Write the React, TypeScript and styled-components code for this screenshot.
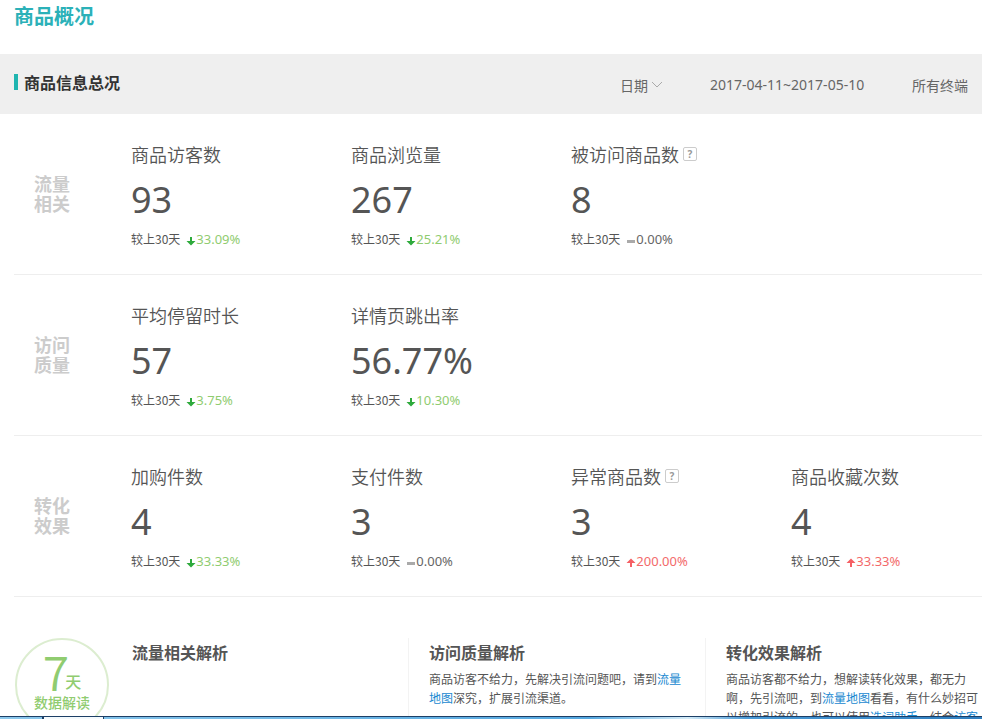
import React from "react";
import styled, { createGlobalStyle, css } from "styled-components";

const Global = createGlobalStyle`
  * { box-sizing: border-box; }
  html, body, #root { height: 100%; }
  body {
    margin: 0;
    overflow: hidden;
    background: #fff;
    color: #555;
    font-family: "Noto Sans", "Noto Sans CJK SC", sans-serif;
  }
  h1, h2, h3, p, dl, dt, dd { margin: 0; }
`;

const cjk = css`font-family: "Noto Sans CJK SC", sans-serif;`;

const Page = styled.div`
  height: 100vh;
  display: flex;
  flex-direction: column;
`;

const Main = styled.main`
  flex: 1;
  min-height: 0;
  overflow: hidden;
`;

const Title = styled.h1`
  ${cjk}
  height: 54px;
  padding: 2px 14px 0;
  font-size: 20px;
  line-height: 28px;
  font-weight: 700;
  color: #2bb1b8;
`;

const Toolbar = styled.header`
  display: flex;
  align-items: center;
  height: 60px;
  padding: 0 14px;
  background: #efefef;
  color: #666;
`;

const SectionTitle = styled.h2`
  ${cjk}
  flex: 1;
  padding-left: 6px;
  margin-bottom: 4px;
  border-left: 4px solid #1fb5b0;
  font-size: 16px;
  line-height: 16px;
  font-weight: 700;
  color: #333;
`;

const ToolButton = styled.button`
  ${cjk}
  display: flex;
  align-items: center;
  gap: 4px;
  padding: 2px 0 0;
  border: 0;
  background: none;
  color: inherit;
  font-size: 14px;
  line-height: 20px;
`;

const DateRange = styled.time`
  margin: 0 44px 0 48px;
  min-width: 158px;
  padding-top: 2px;
  font-size: 14px;
  line-height: 20px;
`;

const MetricRow = styled.section`
  display: grid;
  grid-template-columns: 117px minmax(0, 1fr);
  height: 161px;
  margin-left: 14px;
  border-bottom: 1px solid #eee;
`;

const Category = styled.h3`
  ${cjk}
  align-self: center;
  width: 36px;
  margin: 0 0 2px 20px;
  font-size: 18px;
  line-height: 20px;
  font-weight: 700;
  color: #ccc;
`;

const Metrics = styled.div`
  display: grid;
  grid-template-columns: repeat(4, 220px);
  padding-top: 27px;
`;

const MetricName = styled.dt`
  ${cjk}
  display: flex;
  align-items: center;
  gap: 4px;
  font-size: 18px;
  line-height: 26px;
  font-weight: 350;
`;

const Help = styled.button`
  width: 14px;
  height: 14px;
  padding: 0;
  border: 1px solid #ccc;
  border-radius: 2px;
  background: #fff;
  color: #999;
  font: 700 10px/12px "Noto Sans", sans-serif;
`;

const Value = styled.dd`
  height: 60px;
  font-size: 36px;
  line-height: 66px;
`;

const Compare = styled.dd`
  ${cjk}
  display: flex;
  align-items: center;
  height: 24px;
  font-size: 12px;
  line-height: 24px;
`;

type Trend = "up" | "down" | "flat";
const trendColor = { up: "#f36a6a", down: "#90cc70", flat: "#666" };

const Change = styled.span<{ $trend: Trend }>`
  display: flex;
  align-items: center;
  margin-left: 6px;
  font-family: "Noto Sans", sans-serif;
  font-size: 13px;
  color: ${(p) => trendColor[p.$trend]};
`;

const TrendSvg = styled.svg`
  width: 10px;
  height: 10px;
  margin-top: 4px;
`;

const Analysis = styled.section`
  display: grid;
  grid-template-columns: 96px repeat(3, minmax(0, 1fr));
  margin-right: -20px;
  padding: 41px 0 0 15px;
`;

const Badge = styled.div`
  ${cjk}
  display: flex;
  flex-direction: column;
  align-items: center;
  width: 94px;
  height: 94px;
  padding-top: 10px;
  border: 2px solid #dcedd0;
  border-radius: 50%;
  color: #90cc70;
  font-size: 14px;
  line-height: 16px;
  font-weight: 500;
`;

const BadgeDays = styled.div`
  display: flex;
  align-items: flex-end;
  height: 44px;
  font-size: 16px;
  line-height: 26px;
`;

const Seven = styled.span`
  margin-right: -4px;
  font-size: 48px;
  line-height: 48px;
  font-weight: 350;
`;

const Note = styled.article<{ $divided?: boolean }>`
  ${cjk}
  min-height: 120px;
  padding: 0 20px;
  border-left: 1px solid ${(p) => (p.$divided ? "#f3f3f3" : "transparent")};
`;

const NoteTitle = styled.h3`
  font-size: 16px;
  line-height: 28px;
  font-weight: 700;
`;

const NoteText = styled.p`
  padding-top: 3px;
  font-size: 12px;
  line-height: 19px;
`;

const Link = styled.a`
  color: #1888d0;
  text-decoration: none;
`;

const Taskbar = styled.footer`
  display: flex;
  flex: none;
  height: 3px;
  padding-left: 42px;
  border-top: 1px solid #1d3f66;
  background: linear-gradient(90deg, #8cc8ec, #55a8e0 60%, #d5ecf8 70%, #4a9ad6 76%, #2f7fc0);
`;

const TaskTab = styled.div`
  width: 62px;
  border: solid #1d3f66;
  border-width: 0 1px 0 2px;
  background: #f4fafd;
`;

function TrendIcon({ trend }: { trend: Trend }) {
  return (
    <TrendSvg viewBox="0 0 10 10" aria-hidden="true">
      {trend === "flat" && <path d="M1 4h8v3H1z" fill="#aaa" />}
      {trend === "down" && <path d="M4 1h2v4h3.500L5 9.500.500 5H4z" fill="#2eaa3c" />}
      {trend === "up" && <path d="M4 9h2V5h3.500L5 .500.500 5H4z" fill="#f55f64" />}
    </TrendSvg>
  );
}

interface Metric {
  name: string;
  value: string;
  change: string;
  trend: Trend;
  help?: boolean;
}

const rows: { category: string; metrics: Metric[] }[] = [
  {
    category: "流量相关",
    metrics: [
      { name: "商品访客数", value: "93", change: "33.09%", trend: "down" },
      { name: "商品浏览量", value: "267", change: "25.21%", trend: "down" },
      { name: "被访问商品数", value: "8", change: "0.00%", trend: "flat", help: true },
    ],
  },
  {
    category: "访问质量",
    metrics: [
      { name: "平均停留时长", value: "57", change: "3.75%", trend: "down" },
      { name: "详情页跳出率", value: "56.77%", change: "10.30%", trend: "down" },
    ],
  },
  {
    category: "转化效果",
    metrics: [
      { name: "加购件数", value: "4", change: "33.33%", trend: "down" },
      { name: "支付件数", value: "3", change: "0.00%", trend: "flat" },
      { name: "异常商品数", value: "3", change: "200.00%", trend: "up", help: true },
      { name: "商品收藏次数", value: "4", change: "33.33%", trend: "up" },
    ],
  },
];

export default function App() {
  return (
    <Page>
      <Global />
      <Main>
        <Title>商品概况</Title>
        <Toolbar>
          <SectionTitle>商品信息总况</SectionTitle>
          <ToolButton type="button">
            日期
            <svg width="10" height="6" viewBox="0 0 10 6" fill="none" stroke="#aaa" aria-hidden="true">
              <path d="M0 0L5 5L10 0" />
            </svg>
          </ToolButton>
          <DateRange>2017-04-11~2017-05-10</DateRange>
          <ToolButton type="button">所有终端</ToolButton>
        </Toolbar>
        {rows.map((row) => (
          <MetricRow key={row.category}>
            <Category>{row.category}</Category>
            <Metrics>
              {row.metrics.map((m) => (
                <dl key={m.name}>
                  <MetricName>
                    {m.name}
                    {m.help && <Help type="button">?</Help>}
                  </MetricName>
                  <Value>{m.value}</Value>
                  <Compare>
                    较上30天
                    <Change $trend={m.trend}>
                      <TrendIcon trend={m.trend} />
                      {m.change}
                    </Change>
                  </Compare>
                </dl>
              ))}
            </Metrics>
          </MetricRow>
        ))}
        <Analysis>
          <Badge>
            <BadgeDays>
              <Seven>7</Seven>天
            </BadgeDays>
            数据解读
          </Badge>
          <Note>
            <NoteTitle>流量相关解析</NoteTitle>
          </Note>
          <Note $divided>
            <NoteTitle>访问质量解析</NoteTitle>
            <NoteText>
              商品访客不给力，先解决引流问题吧，请到<Link href="#map">流量地图</Link>深究，扩展引流渠道。
            </NoteText>
          </Note>
          <Note $divided>
            <NoteTitle>转化效果解析</NoteTitle>
            <NoteText>
              商品访客都不给力，想解读转化效果，都无力啊，先引流吧，到<Link href="#map">流量地图</Link>看看，有什么妙招可以增加引流的，也可以使用<Link href="#words">选词助手</Link>，结合<Link href="#visitors">访客</Link>
            </NoteText>
          </Note>
        </Analysis>
      </Main>
      <Taskbar>
        <TaskTab />
      </Taskbar>
    </Page>
  );
}
